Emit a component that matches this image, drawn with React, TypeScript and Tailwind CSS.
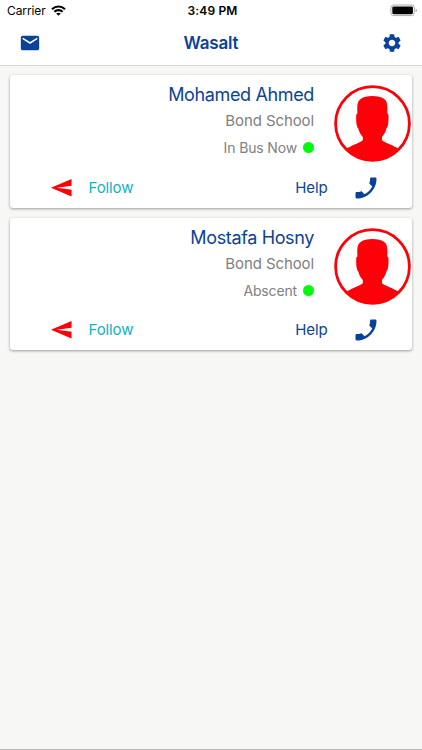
import { MdMail, MdPhone, MdSend, MdSettings } from "react-icons/md";

type Student = { name: string; school: string; status: string };

const students: Student[] = [
  { name: "Mohamed Ahmed", school: "Bond School", status: "In Bus Now" },
  { name: "Mostafa Hosny", school: "Bond School", status: "Abscent" },
];

function StatusBar() {
  return (
    <div className="flex h-5 items-center justify-between pl-[7px] pr-1 pt-[2px] text-black">
      <div className="flex w-[140px] items-center gap-[5px]">
        <span className="text-[12px] leading-5 tracking-[-0.1px]">Carrier</span>
        <svg className="-mt-px" width="15" height="11" viewBox="0 0 15 11" fill="none" stroke="currentColor" strokeWidth="2.2">
          <path d="M1 4.2C4.700 .6 10.300.6 14 4.200" />
          <path d="M3.400 6.800c2.300-2.200 5.900-2.200 8.200 0" />
          <path d="M7.500 10.800 5.200 8.600c1.300-1.200 3.300-1.200 4.600 0Z" fill="currentColor" stroke="none" />
        </svg>
      </div>
      <span className="text-[12px] font-semibold leading-5 tracking-[0.15px]">3:49 PM</span>
      <div className="flex w-[140px] justify-end">
        <svg className="-mt-[2px]" width="28" height="13" viewBox="0 0 28 13">
          <rect x=".9" y="1" width="23.4" height="10.6" rx="2.8" fill="#fff" stroke="#aaa" />
          <rect x="2.3" y="2.4" width="20.6" height="7.8" rx="1.4" fill="#000" />
          <path d="M25.7 4.4c1.500.6 1.500 3.200 0 3.800Z" fill="#999" />
        </svg>
      </div>
    </div>
  );
}

function Avatar() {
  return (
    <svg className="mr-px mt-[10px] shrink-0" width="77" height="77" viewBox="0 0 77 77">
      <circle cx="38.5" cy="38.5" r="36.9" fill="#fff" stroke="#fd0008" strokeWidth="2.8" />
      <path
        fill="#fd0008"
        d="M12 64C17 60.500 24.500 58.500 28.800 55.200V52C26.500 49.500 25 46.500 24.200 43.200C22.600 42.200 22 36 22.200 31C22.200 29.500 22.700 28.800 23.400 28.500C23 20 23.500 17 26 14.500C29 11.700 33.500 11 38.300 11S47.800 11.700 50.800 14.500C53.300 17 53.700 20 53.300 28.500C54 28.800 54.500 29.500 54.500 31C54.700 36 54.200 42.200 52.500 43.200C51.700 46.500 50.200 49.500 48 52V55.200C52.300 58.500 60 60.500 65 64A36.800 36.800 0 0 1 12 64Z"
      />
    </svg>
  );
}

function StudentCard({ name, school, status }: Student) {
  return (
    <article className="h-[132.7px] rounded-[3px] bg-white shadow-[0_1px_3px_rgba(0,0,0,0.38)]">
      <div className="flex h-[92px] justify-end gap-[19.5px]">
        <div className="flex flex-col items-end pt-[8px]">
          <h2 className="text-[18px] leading-6 tracking-[-0.36px] text-[#0a429b]">{name}</h2>
          <p className="mt-[3px] text-[15px] leading-[22px] tracking-[-0.1px] text-[#808080]">{school}</p>
          <p className="mt-[5px] flex items-center gap-[6px] text-[14px] leading-5 tracking-[-0.15px] text-[#808080]">
            <span className="pt-px">{status}</span>
            <span className="size-[11px] rounded-full bg-[#00fa0b]" />
          </p>
        </div>
        <Avatar />
      </div>
      <div className="flex h-[41px] items-center justify-between pl-10 pr-8">
        <button className="flex items-center gap-[15px] text-[15px] tracking-[-0.1px] text-[#12b1c4]">
          <MdSend className="size-[23.5px] -scale-x-100 text-[#fd0008]" />
          <span className="pt-px">Follow</span>
        </button>
        <button className="flex items-center gap-[24px] text-[15px] tracking-[-0.1px] text-[#0a429b]">
          <span className="pt-px">Help</span>
          <MdPhone className="size-7 -scale-x-100" />
        </button>
      </div>
    </article>
  );
}

export default function App() {
  return (
    <div className="flex h-[750px] w-[422px] flex-col border-b border-[#b8b8b8] bg-[#f7f7f5] font-[Inter,sans-serif]">
      <header className="h-[66px] border-b border-[#d6d6d6] bg-white">
        <StatusBar />
        <div className="flex h-[45px] items-center justify-between pl-[19px] pr-[19px] text-[#0a429b]">
          <MdMail className="size-[22px]" />
          <h1 className="pt-[2px] text-[17px] font-semibold tracking-[-0.2px]">Wasalt</h1>
          <MdSettings className="size-[22px]" />
        </div>
      </header>
      <main className="flex flex-col gap-[10px] pl-[10px] pr-[10.5px] pt-[9px]">
        {students.map((s) => (
          <StudentCard key={s.name} {...s} />
        ))}
      </main>
    </div>
  );
}
